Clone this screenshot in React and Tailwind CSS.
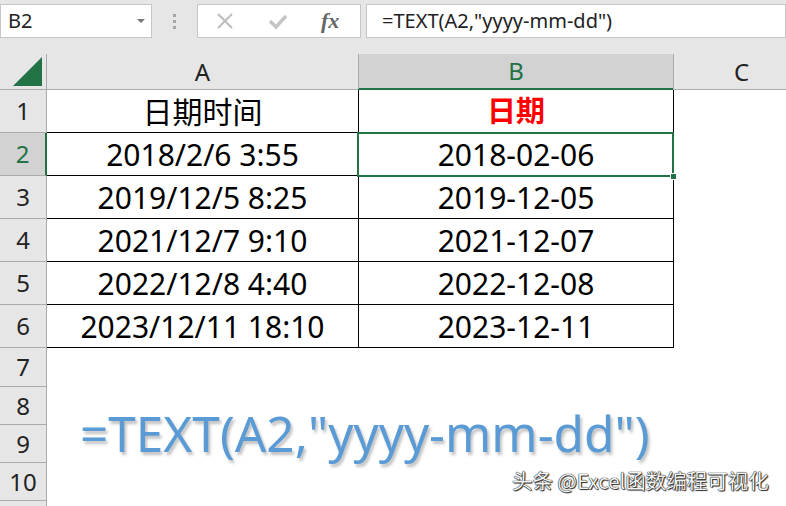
import React from 'react';

const rows = [
  { n: '1', a: '日期时间', b: '日期', head: true, h: 'h-[43px]' },
  { n: '2', a: '2018/2/6 3:55', b: '2018-02-06', h: 'h-[43px]', active: true },
  { n: '3', a: '2019/12/5 8:25', b: '2019-12-05', h: 'h-[43px]' },
  { n: '4', a: '2021/12/7 9:10', b: '2021-12-07', h: 'h-[43px]' },
  { n: '5', a: '2022/12/8 4:40', b: '2022-12-08', h: 'h-[43px]' },
  { n: '6', a: '2023/12/11 18:10', b: '2023-12-11', h: 'h-[43px]' },
];

const emptyRows = [
  { n: '7', h: 'h-[39px]' },
  { n: '8', h: 'h-[38px]' },
  { n: '9', h: 'h-[38px]' },
  { n: '10', h: 'h-[38px]' },
  { n: '', h: 'h-[20px]' },
];

const font = { fontFamily: '"Noto Sans", "Noto Sans CJK SC", sans-serif' };

// Formula bar across the top
function FormulaBar() {
  return (
    <div className="flex items-center h-[54px] bg-[#e6e6e6] pb-[16px] pt-[4px]">
      <div className="flex items-center justify-between w-[152px] h-[34px] bg-white border border-[#c6c6c6] pl-[7px] pr-[6px]">
        <span className="text-[20px] text-[#222]">B2</span>
        <span className="w-0 h-0 border-l-[4px] border-r-[4px] border-t-[4px] border-l-transparent border-r-transparent border-t-[#777]" />
      </div>
      <div className="w-[45px] flex flex-col items-center gap-[3px]">
        <span className="w-[3px] h-[3px] bg-[#a6a6a6]" />
        <span className="w-[3px] h-[3px] bg-[#a6a6a6]" />
        <span className="w-[3px] h-[3px] bg-[#a6a6a6]" />
      </div>
      <div className="flex items-center w-[164px] h-[34px] bg-white border border-[#c6c6c6]">
        <svg width="18" height="18" viewBox="0 0 18 18" className="ml-[18px]">
          <path d="M2 2 L16 16 M16 2 L2 16" stroke="#bdbdbd" strokeWidth="2" />
        </svg>
        <svg width="20" height="18" viewBox="0 0 20 18" className="ml-[34px]">
          <path d="M2 9 L8 15 L18 4" stroke="#c4c4c4" strokeWidth="3.5" fill="none" />
        </svg>
        <span
          className="ml-[33px] text-[22px] italic font-bold text-[#666] leading-none"
          style={{ fontFamily: '"Liberation Serif", serif' }}
        >
          fx
        </span>
      </div>
      <div className="flex-1 flex items-center h-[34px] bg-white border border-[#c6c6c6] ml-[5px] pl-[15px]">
        <span className="text-[20px] text-[#222]">=TEXT(A2,"yyyy-mm-dd")</span>
      </div>
    </div>
  );
}

function ColumnHeaders() {
  return (
    <div className="flex h-[36px] text-[24px]">
      <div className="w-[47px] shrink-0 border-r border-b border-[#ababab] bg-[#e6e6e6] flex items-end justify-end pr-[4px] pb-[3px]">
        <svg width="29" height="29" viewBox="0 0 29 29">
          <polygon points="29,0 29,29 0,29" fill="#217346" />
        </svg>
      </div>
      <div className="w-[311px] shrink-0 border-b border-[#ababab] bg-[#e6e6e6] flex items-center justify-center text-[#222]">A</div>
      <div className="w-[315px] shrink-0 border-l border-[#ababab] border-b-2 border-b-[#217346] bg-[#d2d2d2] flex items-center justify-center text-[#217346]">B</div>
      <div className="flex-1 border-l border-b border-[#ababab] bg-[#e6e6e6] flex items-center pl-[60px] text-[#222]">C</div>
    </div>
  );
}

export default function App() {
  return (
    <div className="w-[786px] h-[506px] overflow-hidden bg-white relative" style={font}>
      <FormulaBar />
      <ColumnHeaders />
      <div className="relative">
        {rows.map((r) => (
          <div key={r.n} className={`flex ${r.h}`}>
            <div
              className={
                r.active
                  ? 'w-[47px] shrink-0 border-r-2 border-r-[#217346] border-b border-b-[#ababab] bg-[#d2d2d2] flex items-center justify-center text-[24px] text-[#217346]'
                  : 'w-[47px] shrink-0 border-r border-b border-[#ababab] bg-[#e6e6e6] flex items-center justify-center text-[24px] text-[#222]'
              }
            >
              {r.n}
            </div>
            <div className="w-[311px] shrink-0 border-b border-black flex items-center justify-center text-[30px] text-black">
              {r.a}
            </div>
            <div
              className={
                r.head
                  ? 'w-[316px] shrink-0 border-l border-r border-b border-black flex items-center justify-center text-[29px] font-bold text-[#ff0000]'
                  : 'w-[316px] shrink-0 border-l border-r border-b border-black flex items-center justify-center text-[30px] text-black'
              }
            >
              {r.b}
            </div>
            <div className="flex-1" />
          </div>
        ))}
        {emptyRows.map((r) => (
          <div key={r.n + r.h} className={`flex ${r.h}`}>
            <div className="w-[47px] shrink-0 border-r border-b border-[#ababab] bg-[#e6e6e6] flex items-center justify-center text-[24px] text-[#222]">
              {r.n}
            </div>
            <div className="flex-1" />
          </div>
        ))}

        {/* selected cell B2 */}
        <div className="absolute left-[357px] top-[42px] w-[317px] h-[45px] border-2 border-[#217346] pointer-events-none" />
        <div className="absolute left-[670px] top-[83px] w-[7px] h-[7px] bg-[#217346] border border-white" />

        {/* big formula caption */}
        <div
          className="absolute left-[80px] top-[319px] text-[49.5px] text-[#5b9bd5] leading-none whitespace-nowrap"
          style={{ textShadow: '2px 3px 3px rgba(0,0,0,0.25)' }}
        >
          =TEXT(A2,"yyyy-mm-dd")
        </div>

        {/* watermark */}
        <div
          className="absolute left-[512px] top-[375px] text-[20.5px] text-[#f4f4f4] whitespace-nowrap"
          style={{ textShadow: '0 0 1px #000, 0 0 1px #000, 1px 1px 1px #333', fontFamily: '"Noto Sans CJK SC", sans-serif' }}
        >
          头条 @Excel函数编程可视化
        </div>
      </div>
    </div>
  );
}
